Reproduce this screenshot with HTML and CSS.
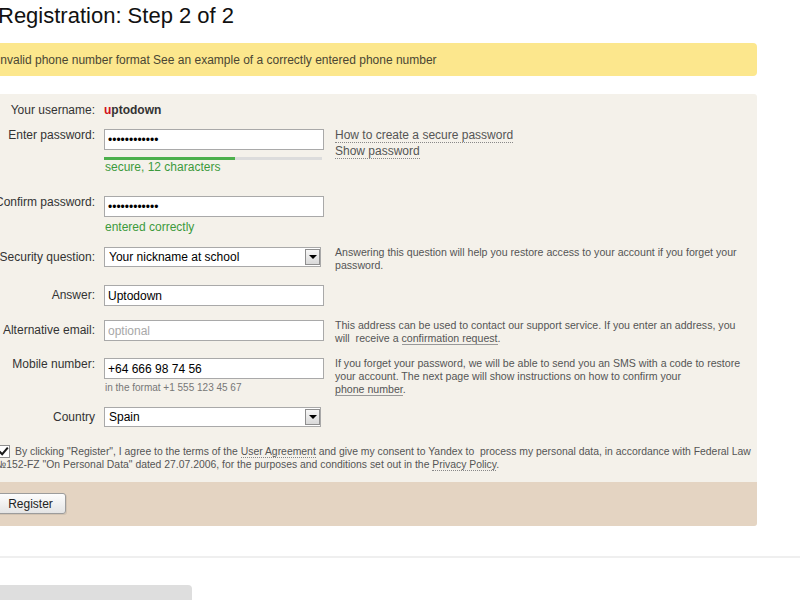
FILE: index.html
```html
<!DOCTYPE html>
<html lang="en">
<head>
    <meta charset="UTF-8">
    <title>Registration: Step 2 of 2</title>
    <link rel="stylesheet" href="styles.css">
</head>
<body>
    <div class="page">
        <h1 class="title">Registration: Step 2 of 2</h1>

        <div class="notice">Invalid phone number format See an example of a correctly entered phone number</div>

        <form class="panel" onsubmit="return false">
            <div class="fields">
                <div class="row row-user">
                    <div class="field-label">Your username:</div>
                    <div class="username"><span class="username-first">u</span>ptodown</div>
                </div>

                <div class="row row-stacked row-password">
                    <div class="field-label">Enter password:</div>
                    <div class="field">
                        <input type="password" class="text-input" value="uptodown2013">
                        <div class="strength"><div class="strength-fill" style="width: 60%"></div></div>
                        <div class="field-status">secure, 12 characters</div>
                    </div>
                    <div class="field-help help-links">
                        <a href="#">How to create a secure password</a><br>
                        <a href="#">Show password</a>
                    </div>
                </div>

                <div class="row row-stacked row-confirm">
                    <div class="field-label">Confirm password:</div>
                    <div class="field">
                        <input type="password" class="text-input" value="uptodown2013">
                        <div class="field-status status-confirm">entered correctly</div>
                    </div>
                </div>

                <div class="row row-select">
                    <div class="field-label">Security question:</div>
                    <div class="select">
                        <select class="select-input">
                            <option>Your nickname at school</option>
                            <option>Your favourite teacher</option>
                        </select>
                        <span class="select-arrow"></span>
                    </div>
                    <div class="field-help">Answering this question will help you restore access to your account if you forget your password.</div>
                </div>

                <div class="row">
                    <div class="field-label">Answer:</div>
                    <input type="text" class="text-input" value="Uptodown">
                </div>

                <div class="row row-email">
                    <div class="field-label">Alternative email:</div>
                    <input type="text" class="text-input" placeholder="optional">
                    <div class="field-help">This address can be used to contact our support service. If you enter an address, you will&nbsp; receive a <a href="#" class="link-plain">confirmation request</a>.</div>
                </div>

                <div class="row row-stacked">
                    <div class="field-label">Mobile number:</div>
                    <div class="field">
                        <input type="text" class="text-input" value="+64 666 98 74 56">
                        <div class="field-hint">in the format +1 555 123 45 67</div>
                    </div>
                    <div class="field-help">If you forget your password, we will be able to send you an SMS with a code to restore your account. The next page will show instructions on how to confirm your <a href="#" class="link-plain">phone&nbsp;number</a>.</div>
                </div>

                <div class="row row-select row-country">
                    <div class="field-label">Country</div>
                    <div class="select">
                        <select class="select-input">
                            <option>Spain</option>
                            <option>Russia</option>
                        </select>
                        <span class="select-arrow"></span>
                    </div>
                </div>
            </div>

            <label class="agreement">
                <span class="checkbox"><svg width="11" height="11" viewBox="0 0 11 11"><path d="M1.5 5.5 L4.2 8.2 L9.8 1.6" fill="none" stroke="#1a1a1a" stroke-width="2"/></svg></span>By clicking "Register", I agree to the terms of the <a href="#">User Agreement</a> and give my consent to Yandex to&nbsp; process my personal data, in accordance with Federal Law №152-FZ "On Personal Data" dated 27.07.2006, for the purposes and conditions set out in the <a href="#">Privacy Policy</a>.
            </label>

            <div class="panel-footer">
                <button type="submit" class="button">Register</button>
            </div>
        </form>

        <hr class="divider">
        <div class="stub"></div>
    </div>
</body>
</html>
```

FILE: styles.css
```css
/* Base */
* {
    box-sizing: border-box;
}

body {
    margin: 0;
    background: #fff;
    color: #333;
    font-family: "Liberation Sans", Arial, sans-serif;
    font-size: 12px;
}

/* the page is scrolled slightly to the right */
.page {
    margin-left: -10px;
}

.title {
    margin: 0;
    padding: 3px 0 0 8px;
    font-size: 22px;
    font-weight: normal;
    line-height: 26px;
    color: #111;
}

/* Error notice */
.notice {
    width: 767px;
    height: 33px;
    margin-top: 14px;
    padding-left: 7px;
    line-height: 34px;
    background: #fce78d;
    border-radius: 0 4px 4px 0;
    color: #4a4633;
}

/* Form panel */
.panel {
    width: 767px;
    margin-top: 18px;
    background: #f4f1ea;
    border-radius: 0 3px 3px 0;
    overflow: hidden;
}

.fields {
    padding: 6px 15px 0 10px;
}

.row {
    display: grid;
    grid-template-columns: 104px 220px 1fr;
    align-items: start;
    margin-top: 13px;
}

.row-user {
    margin-top: 0;
}

.row-password {
    margin-top: 8px;
}

.row-confirm {
    margin-top: 22px;
}

.row-email {
    margin-top: 14px;
}

.row-country {
    margin-top: 11px;
}

.field-label {
    display: flex;
    justify-content: flex-end;
    padding-right: 9px;
    line-height: 21px;
    white-space: nowrap;
    color: #333;
}

.row-select .field-label {
    line-height: 20px;
}

/* labels of fields with a note below sit a little higher */
.row-stacked .field-label {
    line-height: 13px;
}

.username {
    line-height: 21px;
    font-weight: bold;
    color: #333;
}

.username-first {
    color: #d0101a;
}

/* Inputs */
.text-input {
    display: block;
    width: 220px;
    height: 21px;
    padding: 0 3px;
    border: 1px solid #a9a9a9;
    background: #fff;
    color: #000;
    font-family: "Liberation Sans", Arial, sans-serif;
    font-size: 12px;
}

.text-input::placeholder {
    color: #a8a8a8;
}

.select {
    position: relative;
    width: 217px;
}

.select-input {
    display: block;
    width: 217px;
    height: 20px;
    padding: 0 20px 0 4px;
    border: 1px solid #a9a9a9;
    border-radius: 0;
    background: #fff;
    color: #000;
    font-family: "Liberation Sans", Arial, sans-serif;
    font-size: 12px;
    appearance: none;
    -webkit-appearance: none;
}

.select-arrow {
    position: absolute;
    top: 2px;
    right: 1px;
    width: 15px;
    height: 16px;
    display: flex;
    align-items: center;
    justify-content: center;
    border: 1px solid #8e8e8e;
    background: linear-gradient(#f7f7f7, #d9d9d9);
    pointer-events: none;
}

.select-arrow::after {
    content: "";
    border-left: 4px solid transparent;
    border-right: 4px solid transparent;
    border-top: 4px solid #000;
}

/* Password strength */
.strength {
    width: 218px;
    height: 3px;
    margin-top: 7px;
    background: #dcdcdc;
}

.strength-fill {
    height: 3px;
    background: #4cb04c;
}

.field-status {
    padding-left: 1px;
    line-height: 14px;
    color: #3c9a3c;
}

.status-confirm {
    margin-top: 3px;
}

.field-hint {
    margin-top: 3px;
    padding-left: 1px;
    font-size: 10px;
    line-height: 12px;
    color: #777;
}

/* Help column */
.field-help {
    margin-top: -1px;
    padding-left: 11px;
    font-size: 10.6px;
    line-height: 13px;
    color: #555;
}

.help-links {
    margin-top: -2px;
    font-size: 12px;
    line-height: 16px;
}

a {
    color: #555;
    text-decoration: none;
    border-bottom: 1px dotted #888;
}

a.link-plain {
    border-bottom-style: solid;
    border-bottom-color: #999;
}

/* Agreement */
.agreement {
    display: block;
    margin: 18px 2px 11px 5px;
    font-size: 10.4px;
    line-height: 13px;
    color: #555;
}

.checkbox {
    display: inline-flex;
    align-items: center;
    justify-content: center;
    width: 13px;
    height: 13px;
    margin: 0 5px 0 2px;
    border: 1px solid #8f8f8f;
    background: #fff;
    vertical-align: -2px;
}

.panel-footer {
    padding: 11px 5px 12px;
    background: #e4d4c2;
}

.button {
    display: block;
    width: 71px;
    height: 21px;
    padding: 0;
    border: 1px solid #9c9c9c;
    border-radius: 3px;
    background: linear-gradient(#fdfdfd, #e4e4e4);
    box-shadow: 1px 1px 0 rgba(0, 0, 0, 0.08);
    color: #222;
    font-family: "Liberation Sans", Arial, sans-serif;
    font-size: 12px;
    cursor: pointer;
}

/* Bottom of page */
.divider {
    margin: 30px 0 0;
    border: 0;
    border-top: 2px solid #efefef;
}

.stub {
    width: 202px;
    height: 15px;
    margin-top: 27px;
    background: #dedede;
    border-radius: 0 4px 0 0;
}
```
